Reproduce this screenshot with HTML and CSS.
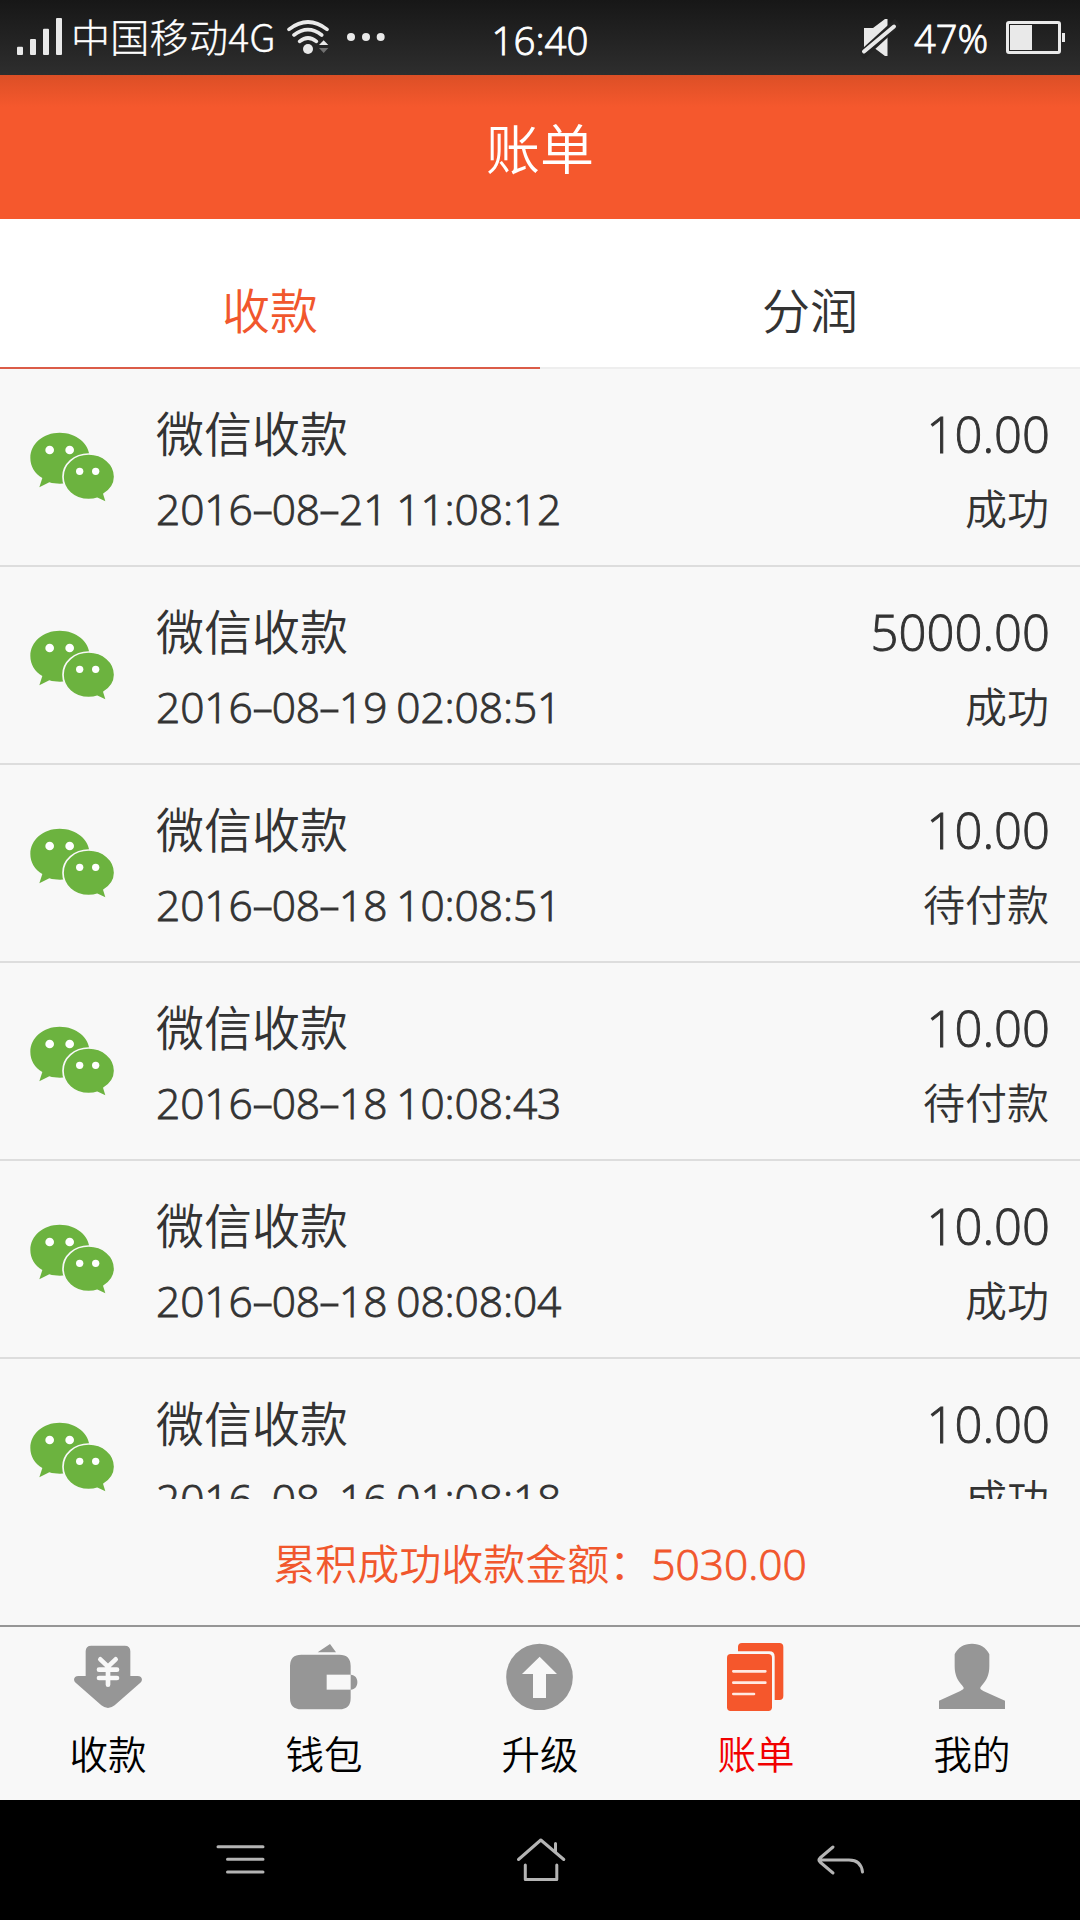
FILE: index.html
```html
<!DOCTYPE html>
<html lang="zh-CN">
<head>
<meta charset="utf-8">
<title>账单</title>
<link rel="stylesheet" href="styles.css">
</head>
<body>
<svg width="0" height="0" class="defs" aria-hidden="true">
  <symbol id="wechat" viewBox="0 0 330 270">
    <path fill="#6cb33f" d="M119 38C70 38 31 71 31 113c0 26 13 47 36 61l-9 28 30-15c10 3 20 4 32 4 50 0 89-33 89-77 0-43-40-76-90-76z"/>
    <path fill="#6cb33f" stroke="#f8f8f8" stroke-width="5" d="M206 102c-43 0-77 30-77 68 0 39 34 69 77 69 10 0 18-1 26-4l28 13-8-26c20-13 32-31 32-52 0-38-35-68-78-68z"/>
    <g fill="#fff"><circle cx="89" cy="90" r="13"/><circle cx="149" cy="90" r="13"/><circle cx="179" cy="154" r="11"/><circle cx="227" cy="154" r="11"/></g>
  </symbol>
</svg>
<div class="screen">
  <div class="status">
    <div class="status-left">
      <svg class="signal" viewBox="42 45 153 135" fill="#e9e9e9"><rect x="51" y="140" width="18" height="25" rx="3"/><rect x="90" y="117" width="18" height="48" rx="3"/><rect x="129" y="86" width="18" height="79" rx="3"/><rect x="168" y="54" width="18" height="111" rx="3"/></svg>
      <span class="carrier">中国移动4G</span>
      <svg class="wifi" viewBox="852 45 147 135" fill="none" stroke="#e9e9e9" stroke-width="11" stroke-linecap="round"><path d="M867 88Q924 44 981 88M882 105Q924 73 965 105M899 124Q924 104 949 124"/><circle cx="924" cy="147" r="15" fill="#e9e9e9" stroke="none"/><path d="M957 135l14-14 14 14z" fill="#e9e9e9" stroke="none"/><path d="M957 144h28l-14 15z" fill="#707070" stroke="none"/></svg>
      <svg class="more" viewBox="1035 45 126 135" fill="#e9e9e9"><circle cx="1053" cy="111" r="12"/><circle cx="1098" cy="111" r="12"/><circle cx="1142" cy="111" r="12"/></svg>
    </div>
    <div class="clock">16:40</div>
    <div class="status-right">
      <svg class="mute" viewBox="860 15 40 45"><path fill="#e9e9e9" d="M864 28h9l12-9h2.500v37h-2.500l-12-9h-9z"/><path stroke="#242424" stroke-width="9" d="M861 56l37-34"/><path stroke="#e9e9e9" stroke-width="4" stroke-linecap="round" d="M864 51.500l30-25"/></svg>
      <span class="percent">47%</span>
      <svg class="battery" viewBox="1004 15 64 45"><rect x="1007.500" y="22.500" width="52" height="30" rx="1.500" fill="none" stroke="#e9e9e9" stroke-width="3"/><path fill="#e9e9e9" d="M1010 25h22v25h-22zM1062 33h3v9h-3z"/></svg>
    </div>
  </div>
  <header class="header"><h1 class="title">账单</h1></header>
  <div class="tabs"><div class="tab tab-active">收款</div><div class="tab">分润</div></div>
  <div class="list">
    <div class="row"><svg class="logo"><use href="#wechat"/></svg><div class="info"><div class="name">微信收款</div><div class="date">2016<span class="dash">-</span>08<span class="dash">-</span>21 11:08:12</div></div><div class="result"><div class="amount">10.00</div><div class="state">成功</div></div></div>
    <div class="row"><svg class="logo"><use href="#wechat"/></svg><div class="info"><div class="name">微信收款</div><div class="date">2016<span class="dash">-</span>08<span class="dash">-</span>19 02:08:51</div></div><div class="result"><div class="amount">5000.00</div><div class="state">成功</div></div></div>
    <div class="row"><svg class="logo"><use href="#wechat"/></svg><div class="info"><div class="name">微信收款</div><div class="date">2016<span class="dash">-</span>08<span class="dash">-</span>18 10:08:51</div></div><div class="result"><div class="amount">10.00</div><div class="state">待付款</div></div></div>
    <div class="row"><svg class="logo"><use href="#wechat"/></svg><div class="info"><div class="name">微信收款</div><div class="date">2016<span class="dash">-</span>08<span class="dash">-</span>18 10:08:43</div></div><div class="result"><div class="amount">10.00</div><div class="state">待付款</div></div></div>
    <div class="row"><svg class="logo"><use href="#wechat"/></svg><div class="info"><div class="name">微信收款</div><div class="date">2016<span class="dash">-</span>08<span class="dash">-</span>18 08:08:04</div></div><div class="result"><div class="amount">10.00</div><div class="state">成功</div></div></div>
    <div class="row"><svg class="logo"><use href="#wechat"/></svg><div class="info"><div class="name">微信收款</div><div class="date">2016<span class="dash">-</span>08<span class="dash">-</span>16 01:08:18</div></div><div class="result"><div class="amount">10.00</div><div class="state">成功</div></div></div>
  </div>
  <div class="summary">累积成功收款金额：<span class="total">5030.00</span></div>
  <nav class="nav">
    <div class="item">
      <svg class="icon" viewBox="84 60 240 210"><path fill="#969696" d="M154 77h100q17 0 17 17v74h22c13 0 17 12 8 20l-77 68q-20 16-40 0l-77-68c-9-8-5-20 8-20h22V94q0-17 17-17z"/><path fill="none" stroke="#f8f8f8" stroke-width="14" stroke-linecap="round" stroke-linejoin="round" d="M181 118l23 22 23-22M204 140v54M177 149h54M177 174h54"/></svg>
      <span>收款</span>
    </div>
    <div class="item">
      <svg class="icon" viewBox="732 60 240 210"><path fill="#969696" d="M833 97l37-25 18 25zM784 104h114q34 0 34 34v26c27 0 27 45 0 45v25q0 34-34 34H784q-34 0-34-34v-96q0-34 34-34z"/><path fill="#f8f8f8" d="M860 164h72v45h-72z"/></svg>
      <span>钱包</span>
    </div>
    <div class="item">
      <svg class="icon" viewBox="60 60 240 210"><circle cx="178.500" cy="171" r="100" fill="#969696"/><path fill="#f8f8f8" d="M179 110l52 52h-33v72h-39v-72h-33z"/></svg>
      <span>升级</span>
    </div>
    <div class="item item-active">
      <svg class="icon icon-bill" viewBox="708 60 240 210"><path fill="#f5572c" d="M774 94V81q0-12 12-12h112q12 0 12 12v147q0 12-12 12h-14V110q0-16-16-16z"/><rect x="741" y="102" width="135" height="171" rx="11" fill="#f5572c"/><path stroke="#ffe9e2" stroke-width="8" stroke-linecap="round" d="M760 154h96M760 188h96M760 222h62"/></svg>
      <span>账单</span>
    </div>
    <div class="item">
      <svg class="icon" viewBox="156 60 240 210"><path fill="#969696" d="M276 71c24 0 43 12 52 32v36c0 24-8 42-22 57-9 10-5 12 4 17l65 29v25H177v-25l64-29c10-5 14-7 5-17-14-15-22-33-22-57v-36c9-20 28-32 52-32z"/></svg>
      <span>我的</span>
    </div>
  </nav>
  <div class="keys">
    <svg class="key" viewBox="200 1830 80 60"><path d="M218 1846.700h45M227.500 1859.300h35.500M227.500 1872h35.500"/></svg>
    <svg class="key" viewBox="500 1830 80 60"><path d="M518.500 1859.500l22.300-19.500 23 19.500M555.500 1843.500v8M525.300 1865v14.500h31.500V1865"/></svg>
    <svg class="key" viewBox="800 1830 80 60"><path d="M833 1847l-13 11q-2 2 0 4l13 11M820 1860h29q12 0 13.500 12"/></svg>
  </div>
</div>
</body>
</html>
```

FILE: styles.css
```css
* { box-sizing: border-box; }
body {
  margin: 0;
  font-family: "Noto Sans CJK SC", "Noto Sans", sans-serif;
  font-weight: 350;
  color: #333;
}
svg { display: block; flex: none; }
.defs { display: none; }
.screen {
  width: 1080px;
  height: 1920px;
  overflow: hidden;
  display: flex;
  flex-direction: column;
  background: #f8f8f8;
}
.screen > * { flex: none; }

/* Figures use a Latin face with a plain "1" */
.clock, .percent, .date, .amount, .total {
  font-family: "Open Sans", "Noto Sans", sans-serif;
  font-weight: 300;
  font-kerning: none;
  -webkit-text-stroke: 0.9px currentColor;
}

.status {
  height: 75px;
  display: grid;
  grid-template-columns: 1fr auto 1fr;
  background: linear-gradient(#171717, #2e2e2e);
  color: #fff;
  font-size: 38px;
  line-height: 76px;
}
.clock { font-size: 38.500px; line-height: 80px; }
.status-left, .status-right { display: flex; white-space: nowrap; }
.status-left svg, .status-right svg { margin-top: 15px; height: 45px; }
.status-left { padding-left: 14px; }
.status-right { justify-content: flex-end; padding-right: 12px; }
.signal { width: 51px; }
.carrier {
  width: 213px;
  margin-left: 6px;
  font-size: 39px;
  font-weight: 300;
  line-height: 70px;
  letter-spacing: 0.3px;
  -webkit-text-stroke: 0.3px currentColor;
}
.wifi { width: 49px; margin-left: 0; }
.more { width: 42px; margin-left: 12px; }
.mute { width: 40px; }
.percent { width: 90px; padding-left: 14px; line-height: 76px; }
.battery { width: 64px; margin-left: 14px; }

.header {
  height: 144px;
  background: linear-gradient(#dc4f26, #f5582d 32px);
  color: #fff;
}
.title {
  margin: 0;
  font-size: 54px;
  font-weight: 350;
  line-height: 143px;
  text-align: center;
}

.tabs { display: flex; height: 150px; background: #fff; }
.tab {
  flex: 1;
  padding-top: 30px;
  border-bottom: 2px solid #eee;
  font-size: 48px;
  line-height: 118px;
  text-align: center;
}
.tab-active { color: #f1572d; border-color: #db5c48; }

.list { height: 1130px; overflow: hidden; }
.row {
  display: flex;
  height: 198px;
  padding: 24px 30px 0 20px;
  border-bottom: 2px solid #ddd;
  line-height: 76px;
}
.logo { width: 110px; height: 90px; margin-top: 27px; }
.info { flex: 1; padding-left: 26px; }
.result { text-align: right; }
.name { font-size: 48px; }
.date { font-size: 42.500px; line-height: 80px; letter-spacing: -0.1px; word-spacing: -2px; }
.dash {
  display: inline-block;
  width: 19px;
  text-align: center;
  transform: scaleX(1.6);
}
.amount { height: 76px; font-size: 49px; line-height: 82px; }
.state { font-size: 42px; margin-right: 1px; }

.summary {
  height: 126px;
  font-size: 42px;
  line-height: 126px;
  text-align: center;
  color: #f1572d;
}
.total { font-size: 42.500px; line-height: 1; }

.nav {
  height: 175px;
  display: flex;
  border-top: 2px solid #969696;
  color: #000;
}
.item {
  flex: 1;
  display: flex;
  flex-direction: column;
  align-items: center;
  padding-top: 13px;
  font-size: 38.500px;
  line-height: 84px;
}
.item-active { color: #f10000; }
.icon { width: 80px; height: 70px; }
.icon-bill { overflow: visible; }

.keys {
  height: 120px;
  display: flex;
  justify-content: space-between;
  padding: 30px 200px;
  background: #000;
}
.key {
  width: 80px;
  height: 60px;
  fill: none;
  stroke: #b4b4b4;
  stroke-width: 3;
  stroke-linecap: round;
  stroke-linejoin: round;
}
```
